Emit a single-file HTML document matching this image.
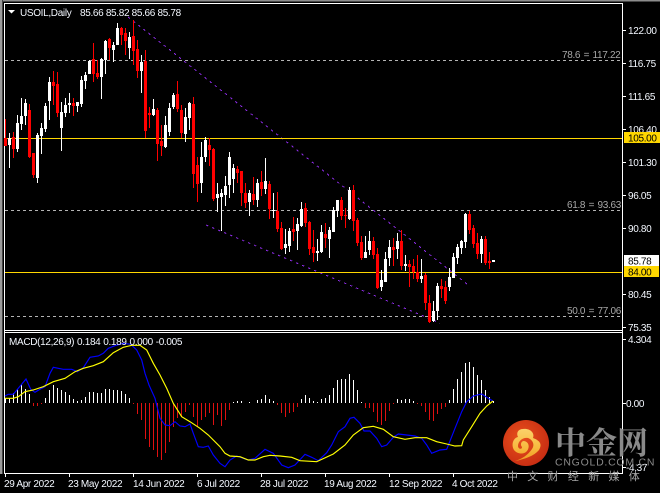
<!DOCTYPE html>
<html><head><meta charset="utf-8"><style>
html,body{margin:0;padding:0;background:#000;width:660px;height:493px;overflow:hidden}
svg{display:block}
text{font-family:"Liberation Sans","Noto Sans CJK SC",sans-serif;font-size:10px;fill:#f4f8ff;letter-spacing:-.33px}
</style></head><body>
<svg width="660" height="493" viewBox="0 0 660 493" xmlns="http://www.w3.org/2000/svg">
<defs>
<radialGradient id="c" cx=".4" cy=".4" r=".7"><stop offset="0" stop-color="#e8501c"/><stop offset="1" stop-color="#c42a12"/></radialGradient>
<linearGradient id="s" x1="0" y1="0" x2="0" y2="1"><stop offset="0" stop-color="#fbd26a"/><stop offset=".6" stop-color="#f7b93e"/><stop offset="1" stop-color="#ef9a22"/></linearGradient>
</defs>
<rect width="660" height="493" fill="#000"/>
<rect x="0" y="0" width="660" height="1.5" fill="#8c8c8c"/>
<rect x="0" y="0" width="2" height="474" fill="#9a9a9a"/>
<rect x="2" y="0" width="1" height="474" fill="#444"/>
<g fill="#fff">
<rect x="4" y="3" width="619" height="1"/>
<rect x="4" y="3" width="1" height="471"/>
<rect x="622" y="3" width="1" height="471"/>
<rect x="4" y="330" width="619" height="1"/>
<rect x="4" y="332" width="619" height="1"/>
<rect x="4" y="473" width="619" height="1"/>
</g>
<!-- axis ticks -->
<path d="M623 30.5h3M623 63.5h3M623 96.5h3M623 129.5h3M623 162.5h3M623 195.5h3M623 228.5h3M623 294.5h3M623 327.5h3M623 339.5h3M623 403.5h3M623 467.5h3M5.5 474v3M69.5 474v3M133.5 474v3M197.5 474v3M261.5 474v3M325.5 474v3M389.5 474v3M453.5 474v3" stroke="#fff" fill="none"/>
<!-- dashed levels -->
<g stroke="#b4b4b4" fill="none" stroke-dasharray="3 3">
<path d="M5 60.5H620M5 210.5H620M5 316.5H620"/>
</g>
<!-- channel -->
<g stroke="#8a2be2" fill="none" stroke-dasharray="2.5 4" shape-rendering="crispEdges">
<path d="M128 17L467 284M206 225L440 323"/>
</g>
<!-- yellow levels -->
<path d="M5 138.5H622M5 272.5H622" stroke="#ffd700" fill="none"/>
<!-- candles: red wicks -->
<path fill="none" stroke="#f00" stroke-width="1" d="M5.5 119V146M13.5 132V158M29.5 104V158M33.5 153V178M53.5 71V105M57.5 72V117M73.5 98V116M93.5 43V82M97.5 60V79M109.5 38V60M121.5 27V45M125.5 28V55M133.5 20V65M137.5 40V78M145.5 50V138M149.5 107V128M157.5 108V161M161.5 125V156M177.5 81V112M181.5 105V138M193.5 97V188M197.5 157V202M209.5 138V166M213.5 148V201M237.5 166V183M241.5 171V206M245.5 183V208M253.5 177V205M261.5 171V196M269.5 181V219M277.5 192V232M281.5 222V250M293.5 217V241M305.5 203V227M309.5 221V255M313.5 230V262M325.5 223V248M341.5 197V220M345.5 208V228M353.5 185V231M357.5 218V246M361.5 236V260M373.5 237V259M377.5 248V289M393.5 238V266M401.5 230V270M409.5 260V287M413.5 259V279M417.5 255V282M425.5 273V310M429.5 295V323M441.5 279V298M445.5 281V304M469.5 211V234M473.5 225V248M477.5 233V259M485.5 236V265M489.5 252V269"/>
<!-- red bodies -->
<path fill="none" stroke="#f00" stroke-width="3" d="M5.5 138V146M13.5 137V149M29.5 110V157M33.5 153V175M53.5 82V86M57.5 84V113M73.5 103V106M93.5 59V74M97.5 73V77M109.5 39V48M121.5 28V35M125.5 33V41M133.5 36V51M137.5 49V71M145.5 61V131M149.5 113V115M157.5 110V144M161.5 141V146M177.5 94V109M181.5 110V133M193.5 104V174M197.5 165V184M209.5 145V150M213.5 149V199M237.5 169V173M241.5 171V193M245.5 193V203M253.5 194V200M261.5 182V189M269.5 184V209M277.5 211V229M281.5 228V249M293.5 229V232M305.5 208V223M309.5 222V249M313.5 247V253M325.5 234V238M341.5 200V216M345.5 215V216M353.5 190V221M357.5 220V243M361.5 242V258M373.5 241V255M377.5 254V288M393.5 247V250M401.5 241V266M409.5 264V267M413.5 266V272M417.5 272V279M425.5 275V303M429.5 303V322M441.5 286V289M445.5 287V301M469.5 214V230M473.5 228V244M477.5 243V254M485.5 239V263M489.5 261V263"/>
<!-- white wicks -->
<path fill="none" stroke="#fff" stroke-width="1" d="M9.5 133V168M17.5 115V152M21.5 98V130M25.5 99V125M37.5 133V183M41.5 123V154M45.5 103V132M49.5 77V120M61.5 102V151M65.5 98V117M69.5 93V113M77.5 102V112M81.5 76V107M85.5 72V89M89.5 60V74M101.5 58V99M105.5 40V74M113.5 42V62M117.5 23V45M129.5 32V59M141.5 55V93M153.5 99V116M165.5 116V148M169.5 103V136M173.5 93V109M185.5 108V142M189.5 102V130M201.5 142V193M205.5 137V162M217.5 183V212M221.5 189V231M225.5 176V206M229.5 152V198M233.5 164V193M249.5 190V216M257.5 179V207M265.5 158V194M273.5 193V218M285.5 229V254M289.5 228V252M297.5 218V250M301.5 202V227M317.5 239V261M321.5 225V253M329.5 227V258M333.5 207V232M337.5 200V217M349.5 187V220M365.5 236V258M369.5 231V255M381.5 270V291M385.5 252V282M389.5 240V266M397.5 233V259M405.5 255V271M421.5 259V283M433.5 301V322M437.5 283V320M449.5 268V291M453.5 253V278M457.5 244V264M461.5 240V254M465.5 213V248M481.5 236V263"/>
<!-- white bodies -->
<path fill="none" stroke="#fff" stroke-width="3" d="M9.5 138V145M17.5 123V149M21.5 116V124M25.5 103V116M37.5 135V178M41.5 128V136M45.5 106V129M49.5 82V101M61.5 112V128M65.5 105V113M69.5 103V105M77.5 102V106M81.5 80V104M85.5 75V81M89.5 61V74M101.5 59V77M105.5 41V60M113.5 45V50M117.5 28V45M129.5 37V48M141.5 62V71M153.5 109V115M165.5 125V147M169.5 108V132M173.5 95V107M185.5 117V134M189.5 103V118M201.5 157V183M205.5 140V157M217.5 194V198M221.5 193V197M225.5 186V195M229.5 157V185M233.5 168V179M249.5 193V202M257.5 183V200M265.5 181V189M273.5 210V211M285.5 244V248M289.5 231V246M297.5 224V231M301.5 209V226M317.5 251V253M321.5 232V252M329.5 230V239M333.5 210V232M337.5 200V211M349.5 190V219M365.5 252V258M369.5 241V250M381.5 280V287M385.5 259V282M389.5 247V258M397.5 241V249M405.5 264V266M421.5 276V279M433.5 311V321M437.5 286V311M449.5 277V287M453.5 257V278M457.5 247V258M461.5 241V248M465.5 214V242M481.5 239V254M493.5 260V262"/>
<!-- MACD histogram -->
<path fill="none" stroke="#fff" stroke-width="1" d="M5.5 398V403M9.5 398V403M13.5 393V403M17.5 389V403M21.5 384V403M25.5 389V403M29.5 394V403M45.5 398V403M49.5 390V403M53.5 385V403M57.5 388V403M61.5 390V403M65.5 392V403M69.5 395V403M73.5 399V403M77.5 401V403M81.5 400V403M85.5 397V403M89.5 392V403M93.5 392V403M97.5 393V403M101.5 393V403M105.5 389V403M109.5 389V403M113.5 390V403M117.5 390V403M121.5 391V403M125.5 394V403M129.5 398V403M233.5 402V403M237.5 401V403M241.5 401V403M249.5 402V403M257.5 400V403M261.5 399V403M265.5 395V403M269.5 399V403M273.5 401V403M301.5 399V403M305.5 395V403M309.5 398V403M313.5 401V403M317.5 402V403M321.5 399V403M325.5 398V403M329.5 395V403M333.5 388V403M337.5 380V403M341.5 379V403M345.5 379V403M349.5 374V403M353.5 380V403M357.5 390V403M361.5 402V403M397.5 399V403M401.5 400V403M405.5 399V403M409.5 399V403M413.5 401V403M449.5 400V403M453.5 389V403M457.5 379V403M461.5 372V403M465.5 363V403M469.5 362V403M473.5 367V403M477.5 375V403M481.5 380V403M485.5 390V403M489.5 397V403M493.5 401V403"/>
<path fill="none" stroke="#e01010" stroke-width="1" d="M33.5 403V406M37.5 403V406M41.5 403V404M133.5 403V404M137.5 403V414M141.5 403V420M145.5 403V439M149.5 403V447M153.5 403V450M157.5 403V457M161.5 403V460M165.5 403V453M169.5 403V442M173.5 403V427M177.5 403V418M181.5 403V417M185.5 403V412M189.5 403V405M193.5 403V417M197.5 403V427M201.5 403V420M205.5 403V417M209.5 403V413M213.5 403V425M217.5 403V415M221.5 403V426M225.5 403V420M229.5 403V410M277.5 403V405M281.5 403V413M285.5 403V417M289.5 403V413M293.5 403V412M297.5 403V407M365.5 403V408M369.5 403V408M373.5 403V412M377.5 403V422M381.5 403V425M385.5 403V421M389.5 403V411M393.5 403V404M417.5 403V404M421.5 403V406M425.5 403V412M429.5 403V420M433.5 403V421M437.5 403V414M441.5 403V409M445.5 403V407"/>
<!-- MACD lines -->
<path fill="none" stroke="#0000ff" stroke-width="1.15" d="M5 396L8.3 394.3L13.3 394.3L18.3 388.3L26 379L30.7 389.3L35 392.3L40 389.3L45 386.7L50 373.3L53.3 367.3L58.3 368.3L63.3 369.3L71.7 369.3L77.3 371.7L83.3 367.7L90 357.3L98.3 356L103.3 353.3L108.3 348.3L115 345.7L123.3 343.3L130.7 344.3L136.7 350L141.7 360L145 373.3L149 385L155 398.3L160 418.3L165 425L170 425.7L175 421.7L180 426L185 426.7L190 424L193.3 433.3L198.3 446.7L203.3 447.3L208.3 446L213.3 455L220 463.3L225 466.7L230 460L236.7 456L243.3 458.3L248.3 460L255 458.3L265 449.3L273.3 453.3L281.7 465L288.3 467.7L295 465L305 454.3L311.7 457.3L318.3 460.7L326.7 452.7L331.7 445L338.3 431.7L345 426.7L350 418.3L354 417.3L360 423.3L364 431L370 431L376.7 438.3L381.7 446.7L386.7 445L393.3 437.3L398.3 434L415 436L421.7 438.3L426.7 445L431.7 453.3L440 450L446.7 449.3L455 428.3L461.7 411.7L466.7 401.7L473.3 396L481.7 394L488.3 398.3L493 401"/>
<path fill="none" stroke="#ffff00" stroke-width="1.15" d="M5 398.3L13.3 398.3L18.3 396.7L25 391.7L33.3 390L43.3 386.7L53.3 381.7L65 378.3L75 371.7L83.3 368.3L93.3 365.7L103.3 361.7L113.3 352.7L123.3 347.3L131.7 345.3L140 345.3L146.7 350L153.3 363.3L160 375L166.7 388.3L173.3 403.3L181.7 416.7L190 421.7L200 428.3L208.3 435L220 446.7L225 453.3L230 456L240 456.7L248.3 460L255 460L263.3 456.7L270 455.3L280 456L291.7 457.3L300 460.7L316.7 461.7L333.3 454L345 445L353.3 435L363.3 427.7L373.3 426.3L383.3 429.3L393.3 436.7L405 439.3L415 437.7L426.7 437.7L436.7 441.7L446.7 444L455 446L461.7 445.7L463.3 440L471.7 426.7L480 413.3L486.7 406L493 401"/>
<!-- axis labels -->
<g>
<text x="628" y="34">122.00</text>
<text x="628" y="67">116.75</text>
<text x="628" y="100">111.65</text>
<text x="628" y="133">106.40</text>
<text x="628" y="166">101.30</text>
<text x="628" y="199">96.05</text>
<text x="628" y="232">90.80</text>
<text x="628" y="298">80.45</text>
<text x="628" y="331">75.35</text>
<text x="628" y="343">4.304</text>
<text x="626" y="407">0.00</text>
<text x="626" y="471">-4.37</text>
</g>
<rect x="624" y="132" width="36" height="11" fill="#ffd700"/>
<text x="628" y="141.5" style="fill:#000">105.00</text>
<rect x="624" y="255" width="35" height="11" fill="#fff"/>
<text x="628" y="264.5" style="fill:#000">85.78</text>
<rect x="624" y="266" width="35" height="11" fill="#ffd700"/>
<text x="628" y="275.5" style="fill:#000">84.00</text>
<!-- fib labels -->
<text x="562" y="58" style="fill:#a8a8a8;word-spacing:1px">78.6 = 117.22</text>
<text x="567" y="208" style="fill:#a8a8a8;word-spacing:1px">61.8 = 93.63</text>
<text x="567" y="314" style="fill:#a8a8a8;word-spacing:1px">50.0 = 77.06</text>
<!-- time labels -->
<text x="4" y="487">29 Apr 2022</text>
<text x="68" y="487">23 May 2022</text>
<text x="133" y="487">14 Jun 2022</text>
<text x="197" y="487">6 Jul 2022</text>
<text x="260" y="487">28 Jul 2022</text>
<text x="324" y="487">19 Aug 2022</text>
<text x="389" y="487">12 Sep 2022</text>
<text x="452" y="487">4 Oct 2022</text>
<!-- headers -->
<path d="M8 10h7l-3.5 3.5z" fill="#fff"/>
<text x="20" y="16">USOIL,Daily</text>
<text x="80" y="16">85.66 85.82 85.66 85.78</text>
<text x="9" y="345" style="word-spacing:.4px">MACD(12,26,9) 0.184 0.189 0.000 -0.005</text>
<!-- watermark -->
<circle cx="526" cy="443" r="23" fill="url(#c)"/>
<path d="M515 461C525 459 534 456 539 450C542 445 541 441 533 438C535 433 530 428 523 429C518 429 516 433 518 437C513 438 511 445 514 450C517 454 524 455 527 451C530 447 529 442 524 441C521 441 520 445 522 447C522 450 518 449 518 446C518 441 523 437 528 438C533 440 535 445 532 449C528 455 522 459 515 461Z" fill="url(#s)"/>
<text x="555" y="454" style="font-family:'Noto Serif CJK SC','Noto Sans CJK SC',serif;font-size:31px;font-weight:700;fill:#8a8a8a;letter-spacing:0">中金网</text>
<text x="555" y="465.5" style="font-size:10.5px;fill:#8a8a8a;letter-spacing:.75px">CNGOLD.COM.CN</text>
<text x="507" y="480" style="font-size:11px;fill:#a8a8a8;letter-spacing:9.3px">中文财经新媒体</text>
</svg>
</body></html>
